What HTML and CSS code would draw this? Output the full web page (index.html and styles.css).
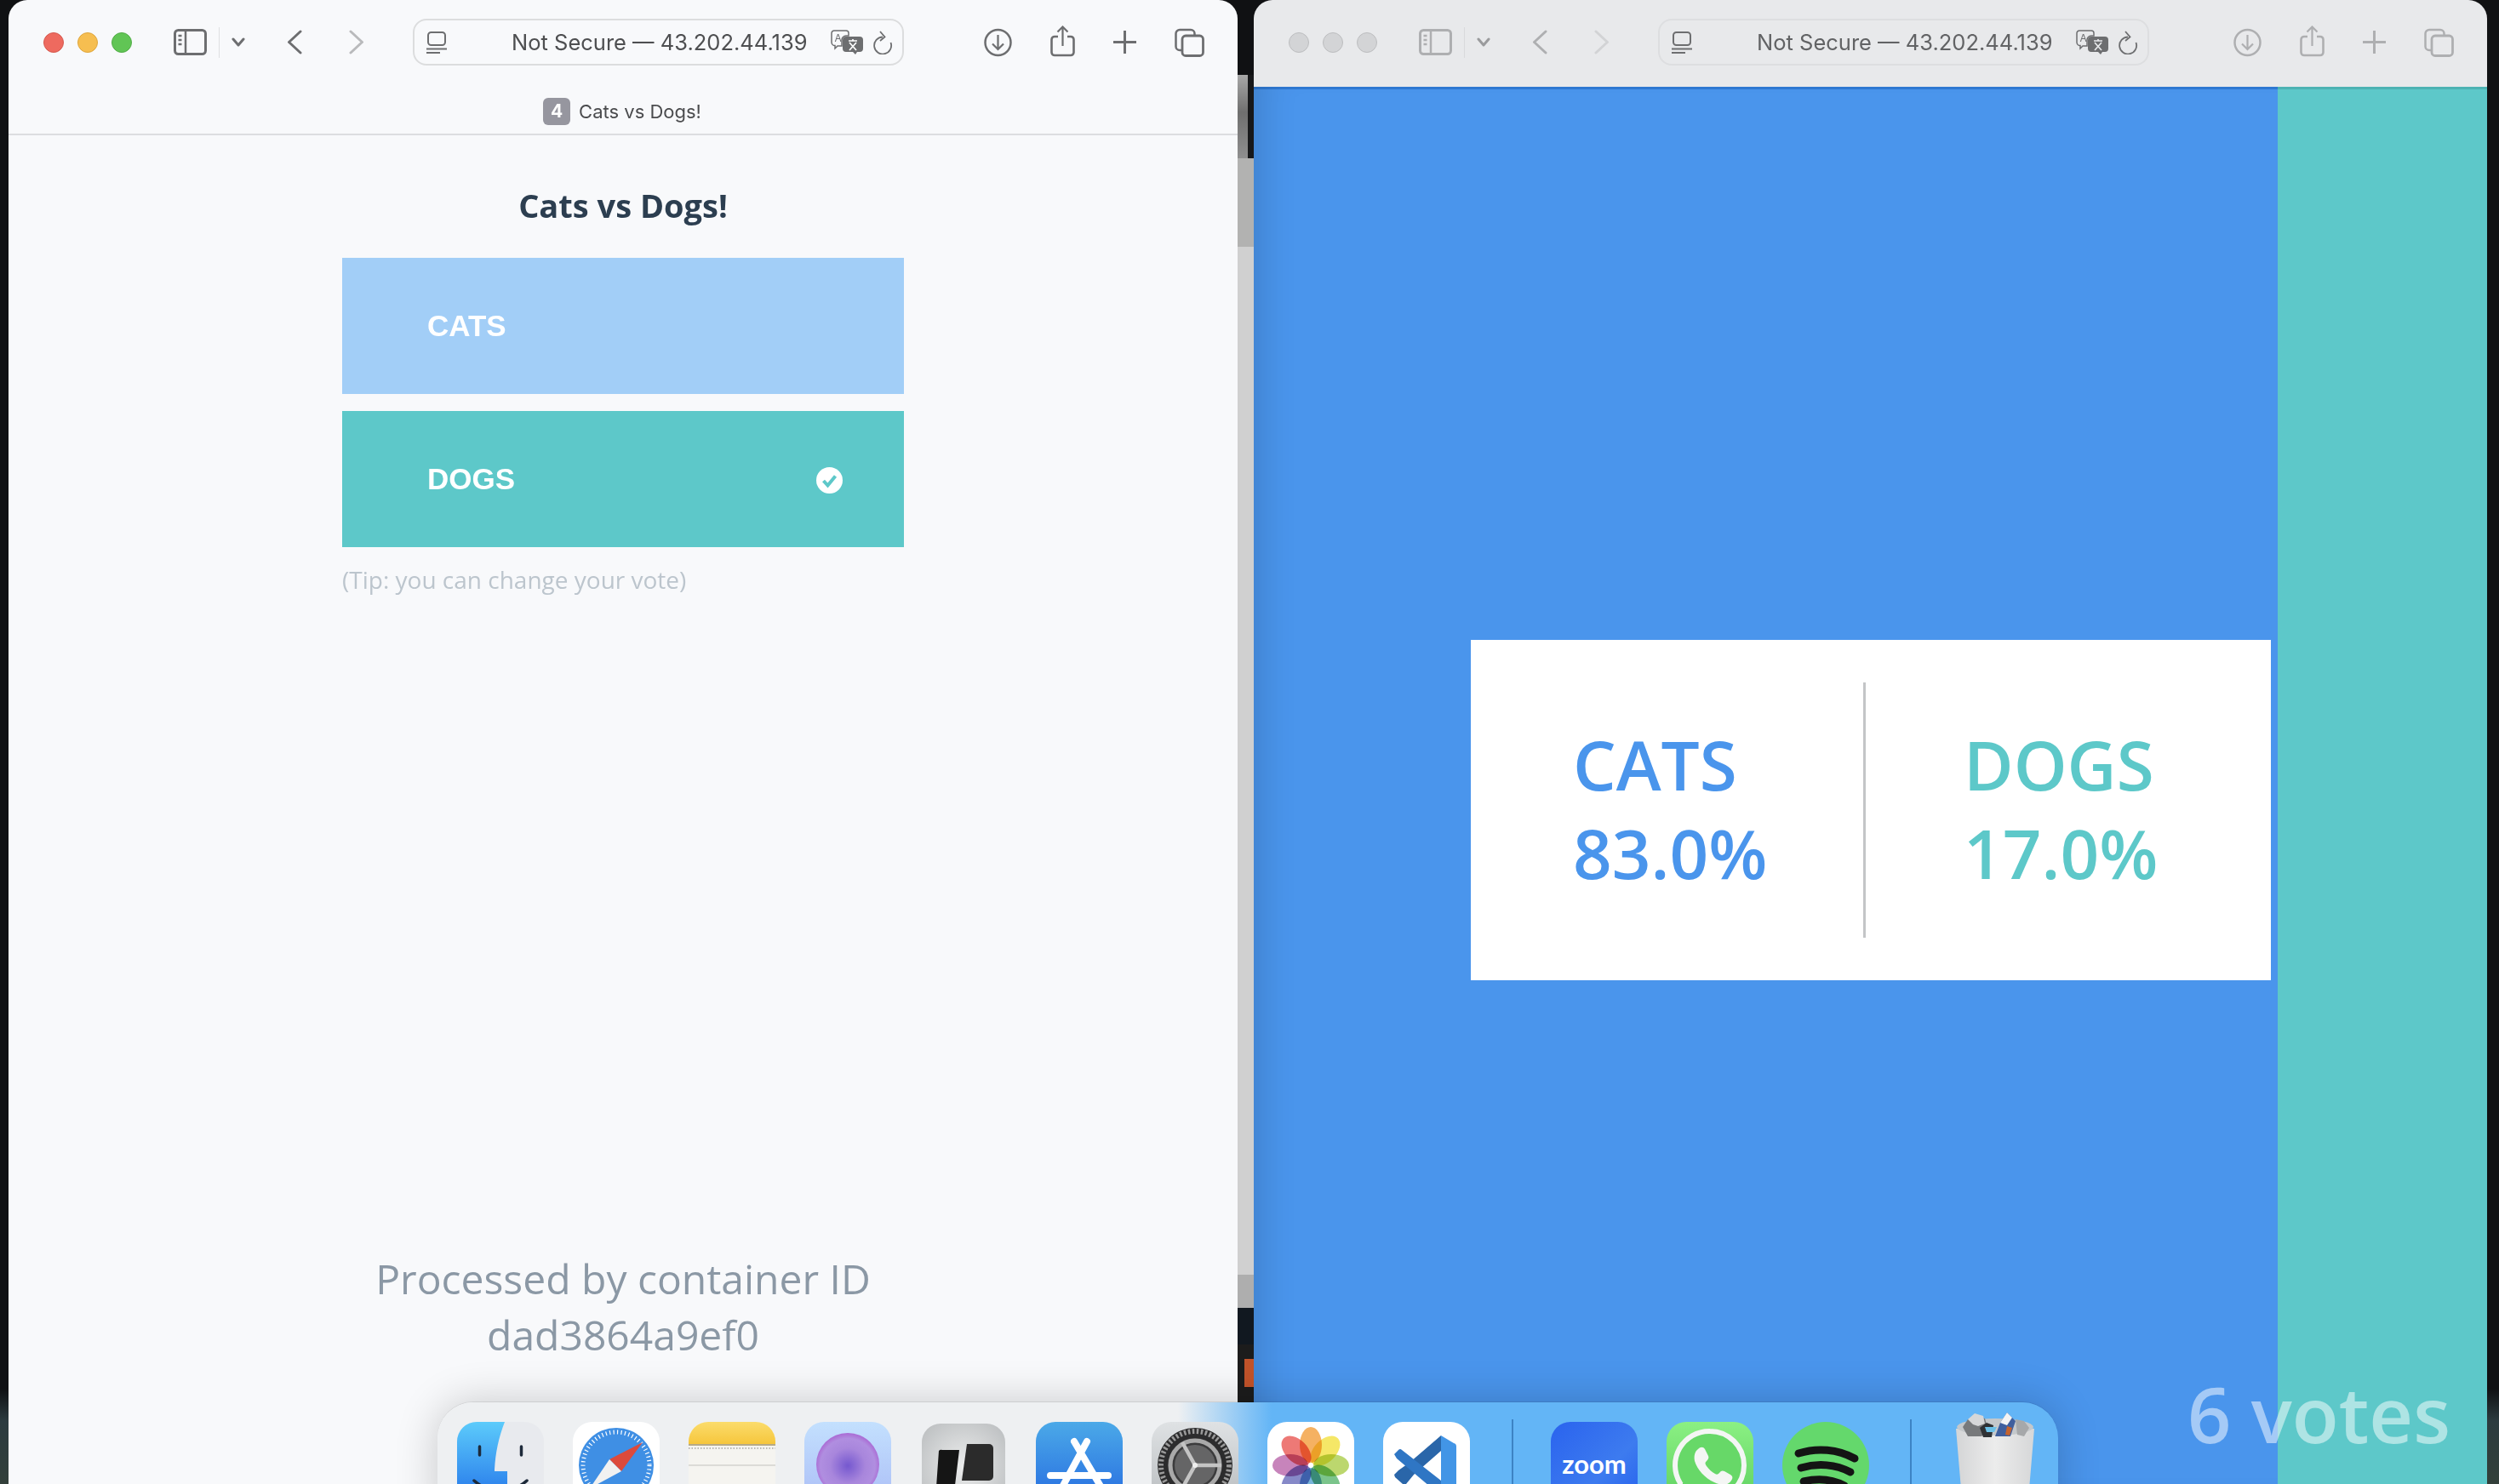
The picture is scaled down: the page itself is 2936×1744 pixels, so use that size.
FILE: index.html
```html
<!DOCTYPE html>
<html lang="en">
<head>
  <meta charset="UTF-8" />
  <title>Cats vs Dogs!</title>
  <link rel="stylesheet" href="styles.css">
</head>
<body>

  <!-- Toolbar icon sprite -->
  <svg class="sprite" aria-hidden="true">
    <symbol id="i-sidebar" viewBox="0 0 39 31"><rect x="1.5" y="1.5" width="36" height="28" rx="4" fill="none" stroke="currentColor" stroke-width="3"/><path d="M14 2v27M5.500 8h4M5.500 13h4M5.500 18h4" fill="none" stroke="currentColor" stroke-width="2.500"/></symbol>
    <symbol id="i-chevron" viewBox="0 0 16 11"><path d="M2 2l6 7 6-7" fill="none" stroke="currentColor" stroke-width="3" stroke-linecap="round" stroke-linejoin="round"/></symbol>
    <symbol id="i-back" viewBox="0 0 18 29"><path d="M16 2L2.500 14.500 16 27" fill="none" stroke="currentColor" stroke-width="3" stroke-linecap="round" stroke-linejoin="round"/></symbol>
    <symbol id="i-forward" viewBox="0 0 18 29"><path d="M2 2l13.500 12.500L2 27" fill="none" stroke="currentColor" stroke-width="3" stroke-linecap="round" stroke-linejoin="round"/></symbol>
    <symbol id="i-page" viewBox="0 0 24 26"><rect x="2" y="1" width="20" height="15" rx="3.500" fill="none" stroke="currentColor" stroke-width="2"/><path d="M0 20.500h24M0 25h16" fill="none" stroke="currentColor" stroke-width="2"/></symbol>
    <symbol id="i-reload" viewBox="0 0 23 28"><path d="M11 7.500A10 10 0 1 0 20.500 14" fill="none" stroke="currentColor" stroke-width="1.800"/><path d="M8 1l5.500 6.500L8 12" fill="none" stroke="currentColor" stroke-width="1.800"/></symbol>
    <symbol id="i-download" viewBox="0 0 33 34"><circle cx="16.500" cy="17" r="15" fill="none" stroke="currentColor" stroke-width="2.500"/><path d="M16.500 8v17M10 18.500l6.500 6.500 6.500-6.500" fill="none" stroke="currentColor" stroke-width="2.200"/></symbol>
    <symbol id="i-share" viewBox="0 0 29 37"><path d="M9 13H5a3.500 3.500 0 0 0-3.500 3.500v15A3.500 3.500 0 0 0 5 35h19a3.500 3.500 0 0 0 3.500-3.500v-15A3.500 3.500 0 0 0 24 13h-4" fill="none" stroke="currentColor" stroke-width="2.600"/><path d="M14.500 24V2M8.500 7.500l6-6 6 6" fill="none" stroke="currentColor" stroke-width="2.200"/></symbol>
    <symbol id="i-plus" viewBox="0 0 27 27"><path d="M13.500 0v27M0 13.500h27" fill="none" stroke="currentColor" stroke-width="3"/></symbol>
    <symbol id="i-tabs" viewBox="0 0 35 34"><path d="M8 26H6a4.500 4.500 0 0 1-4.500-4.500v-15A4.500 4.500 0 0 1 6 2h13a4.500 4.500 0 0 1 4.500 4.500V8" fill="none" stroke="currentColor" stroke-width="2.500"/><rect x="9" y="9" width="24.500" height="23.500" rx="4" fill="none" stroke="currentColor" stroke-width="2.800"/></symbol>
  </svg>

  <!-- Slice of the desktop between the two windows -->
  <div class="desk-strip">
    <div class="strip-top"></div>
    <div class="strip-bar"></div>
    <div class="strip-gray"></div>
    <div class="strip-light"></div>
    <div class="strip-mid"></div>
    <div class="strip-navy"></div>
    <div class="strip-term"><span class="ubuntu-tile"></span></div>
  </div>

  <!-- === Vote window === -->
  <section class="window window-left">
    <header class="toolbar">
      <div class="lights">
        <span class="light red"></span>
        <span class="light yellow"></span>
        <span class="light green"></span>
      </div>
      <svg class="tb-sidebar"><use href="#i-sidebar"/></svg>
      <span class="tb-divider"></span>
      <svg class="tb-chevron"><use href="#i-chevron"/></svg>
      <svg class="tb-back"><use href="#i-back"/></svg>
      <svg class="tb-forward"><use href="#i-forward"/></svg>
      <div class="address">
        <svg class="addr-page"><use href="#i-page"/></svg>
        <span class="addr-text">Not Secure — 43.202.44.139</span>
        <svg class="addr-translate" viewBox="0 0 38 29">
          <path d="M4 1h14a3 3 0 0 1 3 3v3h-3a5 5 0 0 0-5 5v7H8l-3 3v-3.500A4 4 0 0 1 1 15V4a3 3 0 0 1 3-3z" fill="none" stroke="currentColor" stroke-width="1.500"/>
          <text x="4.500" y="14" class="glyph-a">A</text>
          <path d="M18 8h16a4 4 0 0 1 4 4v10a4 4 0 0 1-4 4h-3l-2 3-3-3h-8a4 4 0 0 1-4-4V12a4 4 0 0 1 4-4z" fill="currentColor"/>
          <path d="M21 13h10M26 11v2M22 24l8-9M22 15l8 9" stroke="#fff" stroke-width="1.700" fill="none"/>
        </svg>
        <svg class="addr-reload"><use href="#i-reload"/></svg>
      </div>
      <div class="tb-actions">
        <svg class="tb-download"><use href="#i-download"/></svg>
        <svg class="tb-share"><use href="#i-share"/></svg>
        <svg class="tb-plus"><use href="#i-plus"/></svg>
        <svg class="tb-tabs"><use href="#i-tabs"/></svg>
      </div>
    </header>

    <div class="tabline">
      <span class="tab-badge">4</span>
      <span class="tab-title">Cats vs Dogs!</span>
    </div>

    <main class="vote-page">
      <h3 class="vote-title">Cats vs Dogs!</h3>
      <div class="vote-box">
        <button class="choice choice-cats">CATS</button>
        <button class="choice choice-dogs">
          DOGS
          <svg class="choice-check" viewBox="0 0 31 31">
            <circle cx="15.500" cy="15.500" r="15.500" fill="#fff"/>
            <path d="M8.500 16l5 5.500 9-11" fill="none" stroke="#5dc8c9" stroke-width="4"/>
          </svg>
        </button>
        <p class="tip">(Tip: you can change your vote)</p>
      </div>
      <p class="processed">Processed by container ID<br>dad3864a9ef0</p>
    </main>
  </section>

  <!-- === Result window === -->
  <section class="window window-right">
    <header class="toolbar">
      <div class="lights">
        <span class="light off"></span>
        <span class="light off"></span>
        <span class="light off"></span>
      </div>
      <svg class="tb-sidebar"><use href="#i-sidebar"/></svg>
      <span class="tb-divider"></span>
      <svg class="tb-chevron"><use href="#i-chevron"/></svg>
      <svg class="tb-back"><use href="#i-back"/></svg>
      <svg class="tb-forward"><use href="#i-forward"/></svg>
      <div class="address">
        <svg class="addr-page"><use href="#i-page"/></svg>
        <span class="addr-text">Not Secure — 43.202.44.139</span>
        <svg class="addr-translate" viewBox="0 0 38 29">
          <path d="M4 1h14a3 3 0 0 1 3 3v3h-3a5 5 0 0 0-5 5v7H8l-3 3v-3.500A4 4 0 0 1 1 15V4a3 3 0 0 1 3-3z" fill="none" stroke="currentColor" stroke-width="1.500"/>
          <text x="4.500" y="14" class="glyph-a">A</text>
          <path d="M18 8h16a4 4 0 0 1 4 4v10a4 4 0 0 1-4 4h-3l-2 3-3-3h-8a4 4 0 0 1-4-4V12a4 4 0 0 1 4-4z" fill="currentColor"/>
          <path d="M21 13h10M26 11v2M22 24l8-9M22 15l8 9" stroke="#e8e9eb" stroke-width="1.700" fill="none"/>
        </svg>
        <svg class="addr-reload"><use href="#i-reload"/></svg>
      </div>
      <div class="tb-actions">
        <svg class="tb-download"><use href="#i-download"/></svg>
        <svg class="tb-share"><use href="#i-share"/></svg>
        <svg class="tb-plus"><use href="#i-plus"/></svg>
        <svg class="tb-tabs"><use href="#i-tabs"/></svg>
      </div>
    </header>

    <main class="result-page">
      <div class="pane-cats"></div>
      <div class="pane-dogs"></div>

      <div class="result-card">
        <div class="result-col col-cats">
          <div>CATS</div>
          <div>83.0%</div>
        </div>
        <div class="result-col col-dogs">
          <div>DOGS</div>
          <div>17.0%</div>
        </div>
      </div>

      <div class="votes">6 votes</div>
    </main>
  </section>

  <!-- === Dock === -->
  <footer class="dock">
    <!-- Finder -->
    <svg class="dock-icon" viewBox="0 0 102 102">
      <defs>
        <linearGradient id="g-finder" x1="0" y1="0" x2="0" y2="1"><stop offset="0" stop-color="#5ccbfb"/><stop offset="1" stop-color="#1f6de8"/></linearGradient>
      </defs>
      <rect width="102" height="102" rx="23" fill="#e8eaee"/>
      <path d="M23 0h33c-7 18-11 36-12 56v2h15v44H23A23 23 0 0 1 0 79V23A23 23 0 0 1 23 0z" fill="url(#g-finder)"/>
      <path d="M26.500 29v10M75.500 29v10" stroke="#1d2a3a" stroke-width="3.500" stroke-linecap="round"/>
      <path d="M20 69c18 16 44 16 62 0" fill="none" stroke="#1d2a3a" stroke-width="3.500" stroke-linecap="round"/>
    </svg>
    <!-- Safari -->
    <svg class="dock-icon" viewBox="0 0 102 102">
      <rect width="102" height="102" rx="23" fill="#fff"/>
      <circle cx="51" cy="51" r="44" fill="#3f8fe4"/>
      <circle cx="51" cy="51" r="39" fill="none" stroke="#fff" stroke-width="5" stroke-dasharray="1.200 3.300"/>
      <path d="M82 24L43 44l14 14z" fill="#dc4a3c"/>
      <path d="M20 78l23-34 14 14z" fill="#f1f1f1"/>
    </svg>
    <!-- Notes -->
    <svg class="dock-icon" viewBox="0 0 102 102">
      <defs>
        <linearGradient id="g-notes" x1="0" y1="0" x2="0" y2="1"><stop offset="0" stop-color="#fbdc6c"/><stop offset="1" stop-color="#f6c63c"/></linearGradient>
        <clipPath id="c-notes"><rect width="102" height="102" rx="23"/></clipPath>
      </defs>
      <g clip-path="url(#c-notes)">
        <rect width="102" height="102" fill="#f5f4f0"/>
        <rect width="102" height="26" fill="url(#g-notes)"/>
        <rect y="26" width="102" height="2" fill="#b5aa88"/>
        <path d="M0 31h102" stroke="#b9b9b6" stroke-width="2" stroke-dasharray="1.500 2"/>
        <path d="M0 51h102M0 76h102" stroke="#dcdbd7" stroke-width="2"/>
      </g>
    </svg>
    <!-- Orb -->
    <svg class="dock-icon" viewBox="0 0 102 102">
      <defs>
        <linearGradient id="g-orb-bg" x1="0" y1="0" x2="0" y2="1"><stop offset="0" stop-color="#c3e0fe"/><stop offset="1" stop-color="#aabcf6"/></linearGradient>
        <radialGradient id="g-orb" cx="0.500" cy="0.520" r="0.620"><stop offset="0" stop-color="#7558cf"/><stop offset="0.450" stop-color="#a886dc"/><stop offset="0.700" stop-color="#b08ee0"/><stop offset="1" stop-color="#a33fc6"/></radialGradient>
      </defs>
      <rect width="102" height="102" rx="23" fill="url(#g-orb-bg)"/>
      <circle cx="51" cy="50" r="37" fill="url(#g-orb)"/>
    </svg>
    <!-- Black tile app -->
    <svg class="dock-icon" viewBox="0 0 102 102">
      <defs>
        <radialGradient id="g-tile" cx="0.500" cy="0.500" r="0.700"><stop offset="0" stop-color="#eceded"/><stop offset="1" stop-color="#b9bcbe"/></radialGradient>
      </defs>
      <rect x="2" y="2" width="98" height="100" rx="22" fill="url(#g-tile)"/>
      <path d="M22 34a4 4 0 0 1 4-1h20l-7 58H18z" fill="#151515"/>
      <path d="M55 26h26a5 5 0 0 1 5 5v33a5 5 0 0 1-5 5H49z" fill="#2b2b2b"/>
    </svg>
    <!-- App Store -->
    <svg class="dock-icon" viewBox="0 0 102 102">
      <defs>
        <linearGradient id="g-store" x1="0" y1="0" x2="0" y2="1"><stop offset="0" stop-color="#4ba9e8"/><stop offset="1" stop-color="#2468e0"/></linearGradient>
      </defs>
      <rect width="102" height="102" rx="23" fill="url(#g-store)"/>
      <path d="M60 23L27 84M45 23l36 61M17 63h68" fill="none" stroke="#fff" stroke-width="8" stroke-linecap="round"/>
    </svg>
    <!-- System Settings -->
    <svg class="dock-icon" viewBox="0 0 102 102">
      <defs>
        <linearGradient id="g-gear" x1="0" y1="0" x2="0" y2="1"><stop offset="0" stop-color="#dfe2e4"/><stop offset="1" stop-color="#b6babd"/></linearGradient>
      </defs>
      <rect width="102" height="102" rx="23" fill="url(#g-gear)"/>
      <circle cx="51" cy="51" r="44" fill="#2c2c2d"/>
      <circle cx="51" cy="51" r="40" fill="none" stroke="#9a9a9a" stroke-width="6" stroke-dasharray="2.500 2.500"/>
      <circle cx="51" cy="51" r="32" fill="#3b3b3c"/>
      <circle cx="51" cy="51" r="29" fill="none" stroke="#a9a9a9" stroke-width="5"/>
      <circle cx="51" cy="51" r="24" fill="#656566"/>
      <path d="M51 51L36 24M51 51l31 0M51 51L36 78" stroke="#c4c4c4" stroke-width="4.500"/>
      <circle cx="51" cy="51" r="3" fill="#efefef"/>
    </svg>
    <!-- Photos -->
    <svg class="dock-icon" viewBox="0 0 102 102">
      <rect width="102" height="102" rx="23" fill="#fff"/>
      <g class="petals">
        <ellipse cx="51" cy="27" rx="13" ry="21" fill="#f29b35" transform="rotate(0 51 51)"/>
        <ellipse cx="51" cy="27" rx="13" ry="21" fill="#f2e13c" transform="rotate(45 51 51)"/>
        <ellipse cx="51" cy="27" rx="13" ry="21" fill="#a9cc45" transform="rotate(90 51 51)"/>
        <ellipse cx="51" cy="27" rx="13" ry="21" fill="#55b36a" transform="rotate(135 51 51)"/>
        <ellipse cx="51" cy="27" rx="13" ry="21" fill="#4f9ed0" transform="rotate(180 51 51)"/>
        <ellipse cx="51" cy="27" rx="13" ry="21" fill="#6467b8" transform="rotate(225 51 51)"/>
        <ellipse cx="51" cy="27" rx="13" ry="21" fill="#b761a8" transform="rotate(270 51 51)"/>
        <ellipse cx="51" cy="27" rx="13" ry="21" fill="#e8534f" transform="rotate(315 51 51)"/>
      </g>
    </svg>
    <!-- VS Code -->
    <svg class="dock-icon" viewBox="0 0 102 102">
      <rect width="102" height="102" rx="23" fill="#fff"/>
      <path d="M14 65l-1-3 5-5 14-10 36-31v18L36 62l-9 11a3 3 0 0 1-4 0z" fill="#2a66a9"/>
      <path d="M13 38l5-5a3 3 0 0 1 4 0l46 36v18L16 43z" fill="#2f76c4"/>
      <path d="M68 16l15 9a4 4 0 0 1 3 4v44a4 4 0 0 1-3 4l-15 10z" fill="#4295e6"/>
    </svg>

    <span class="dock-sep sep-one"></span>

    <!-- Zoom -->
    <div class="dock-zoom"><span>zoom</span></div>
    <!-- WhatsApp -->
    <svg class="dock-icon" viewBox="0 0 102 102">
      <defs>
        <linearGradient id="g-wa" x1="0" y1="0" x2="0" y2="1"><stop offset="0" stop-color="#8bf083"/><stop offset="1" stop-color="#5ccf5f"/></linearGradient>
      </defs>
      <rect width="102" height="102" rx="23" fill="url(#g-wa)"/>
      <path d="M51 11a40 40 0 0 1 0 80c-7 0-14-2-20-5l-21 6 6-20a40 40 0 0 1 35-61z" fill="#67d868" stroke="#f4f6f4" stroke-width="6"/>
      <path d="M37 32c3-3 6-3 8 0l4 8c1 2 0 4-2 6-2 2-2 3 0 6 3 4 6 7 10 9 2 1 3 1 5-1 2-3 4-3 6-2l7 4c3 2 3 4 1 7-4 6-12 6-20 2-11-5-20-15-23-25-1-6 0-11 4-14z" fill="#f4f6f4"/>
    </svg>
    <!-- Spotify -->
    <svg class="dock-icon" viewBox="0 0 102 102">
      <circle cx="51" cy="51" r="51" fill="#64d86c"/>
      <path d="M19 37c22-7 46-5 66 6M22 54c20-6 41-4 58 5M25 70c17-4 33-3 48 5" fill="none" stroke="#141414" stroke-width="9" stroke-linecap="round"/>
    </svg>

    <span class="dock-sep sep-two"></span>

    <!-- Trash -->
    <svg class="dock-trash" viewBox="0 0 92 90">
      <defs>
        <linearGradient id="g-trash" x1="0" y1="0" x2="1" y2="0"><stop offset="0" stop-color="#d4d5d6"/><stop offset="0.500" stop-color="#ececec"/><stop offset="1" stop-color="#d6d7d8"/></linearGradient>
      </defs>
      <path d="M0 19l6 71h80l6-71z" fill="url(#g-trash)"/>
      <ellipse cx="46" cy="17" rx="45" ry="10" fill="#c4c8cb"/>
      <path d="M8 17l6-9 12-3 8 2 4 14-8 7H14z" fill="#77797b"/>
      <path d="M14 8l8-7 10 3 2 9-8 3-6-2z" fill="#d6d7d8"/>
      <path d="M28 18l8-6 8 3-2 14H32z" fill="#2f3134"/>
      <path d="M34 17h14l-3 6H36z" fill="#6cc1e8"/>
      <path d="M46 28l6-16 8-12 10 10-6 18z" fill="#3f5f9e"/>
      <path d="M52 12l8-12 6 6-6 9z" fill="#f4f4f4"/>
      <path d="M60 16l6 2-3 9-5-1z" fill="#c4632e"/>
      <path d="M70 8l10 2 6 8-6 10-8-2z" fill="#a6a8aa"/>
    </svg>
  </footer>

</body>
</html>
```

FILE: styles.css
```css
/* === Desktop === */
html, body {
  margin: 0;
  height: 100%;
}

body {
  position: relative;
  width: 2936px;
  height: 1744px;
  overflow: hidden;
  background: linear-gradient(#101113 0, #101113 1632px, #2c3b3f 1670px, #33403a 1744px);
  font-family: 'Open Sans', sans-serif;
}

.sprite {
  position: absolute;
  width: 0;
  height: 0;
}

/* === Strip between windows === */
.desk-strip {
  position: absolute;
  left: 1454px;
  top: 0;
  width: 19px;
  height: 1744px;
  display: flex;
  flex-direction: column;
}

.strip-top {
  height: 88px;
  background: #101113;
}

.strip-bar {
  height: 98px;
  background: linear-gradient(#a8a8a8, #6f6f6f 45%, #8f8f8f);
  border-right: 7px solid #17181a;
}

.strip-gray {
  height: 104px;
  background: #b2b2b1;
}

.strip-light {
  height: 1208px;
  background: #d0d0d0;
}

.strip-mid {
  height: 39px;
  background: #aeaeae;
}

.strip-navy {
  height: 43px;
  background: #111820;
}

.strip-term {
  flex: 1;
  background: #1c1c1c;
  padding: 17px 0 0 8px;
}

.ubuntu-tile {
  display: block;
  width: 11px;
  height: 33px;
  background: #c2532a;
}

/* === Windows === */
.window {
  position: absolute;
  top: 0;
  height: 1744px;
  border-radius: 22px 22px 0 0;
  overflow: hidden;
  display: flex;
  flex-direction: column;
}

.window-left {
  left: 10px;
  width: 1444px;
  background: #f8f9fb;
}

.window-right {
  left: 1473px;
  width: 1449px;
  background: #e8e9eb;
}

/* === Toolbar === */
.toolbar {
  flex: none;
  height: 102px;
  display: flex;
  align-items: center;
  padding: 0 0 3px 41px;
  box-sizing: border-box;
  color: #6d6e70;
}

.toolbar svg {
  flex: none;
}

.lights {
  display: flex;
  gap: 16px;
  margin-right: 49px;
}

.light {
  width: 24px;
  height: 24px;
  border-radius: 50%;
  box-sizing: border-box;
}

.red {
  background: #ee6a5f;
  border: 1px solid #d5594f;
}

.yellow {
  background: #f6be50;
  border: 1px solid #dfa63c;
}

.green {
  background: #61c555;
  border: 1px solid #52ad47;
}

.off {
  background: #d3d4d6;
  border: 1px solid #bcbdbf;
}

.tb-sidebar {
  width: 39px;
  height: 31px;
}

.tb-divider {
  width: 1px;
  height: 36px;
  margin: 0 14px;
  background: #dfe0e2;
}

.tb-chevron {
  width: 16px;
  height: 11px;
  margin-right: 49px;
}

.tb-back {
  width: 18px;
  height: 29px;
  margin-right: 55px;
}

.tb-forward {
  width: 18px;
  height: 29px;
  margin-right: 57px;
  color: #b9babc;
}

/* === Address bar === */
.address {
  width: 577px;
  height: 55px;
  display: flex;
  align-items: center;
  box-sizing: border-box;
  padding: 0 11px 0 14px;
  border: 2px solid #dcddde;
  border-radius: 16px;
}

.addr-page {
  width: 24px;
  height: 26px;
}

.addr-text {
  margin-left: 76px;
  font-family: Inter, sans-serif;
  font-size: 25.500px;
  color: #4e4f51;
  white-space: nowrap;
}

.addr-translate {
  width: 38px;
  height: 29px;
  margin-left: auto;
}

.addr-reload {
  width: 23px;
  height: 28px;
  margin-left: 12px;
}

.glyph-a {
  font-family: Inter, sans-serif;
  font-size: 12px;
  fill: currentColor;
}

/* === Toolbar actions === */
.tb-actions {
  margin-left: auto;
  padding-right: 39px;
  display: flex;
  align-items: center;
  gap: 45px;
}

.tb-download {
  width: 33px;
  height: 34px;
}

.tb-share {
  width: 29px;
  height: 37px;
  margin-top: -3px;
}

.tb-plus {
  width: 27px;
  height: 27px;
}

.tb-tabs {
  width: 35px;
  height: 34px;
}

/* Inactive window is washed out */
.window-right .tb-sidebar,
.window-right .tb-chevron,
.window-right .tb-back,
.window-right .tb-actions {
  color: #aeafb1;
}

.window-right .tb-chevron {
  color: #9a9b9d;
}

.window-right .tb-forward {
  color: #d2d3d5;
}

.window-right .addr-text {
  color: #626365;
}

.window-right .address {
  border-color: #dddee0;
}

.window-right .tb-divider {
  background: #d9dadc;
}

/* === Tab line === */
.tabline {
  flex: none;
  height: 57px;
  display: flex;
  justify-content: center;
  align-items: center;
  gap: 10px;
  padding: 2px 2px 0 0;
  box-sizing: border-box;
  border-bottom: 2px solid #dcdde0;
}

.tab-badge {
  width: 32px;
  height: 32px;
  border-radius: 6px;
  background: #96969f;
  color: #fff;
  font-family: Inter, sans-serif;
  font-size: 21px;
  font-weight: 700;
  line-height: 32px;
  text-align: center;
}

.tab-title {
  font-family: Inter, sans-serif;
  font-size: 22px;
  color: #4b4c4e;
}

/* === Vote page === */
.vote-page {
  flex: 1;
  display: flex;
  flex-direction: column;
  align-items: center;
}

.vote-title {
  margin: 56px 0 0;
  font-size: 38px;
  font-weight: 700;
  line-height: 52px;
  color: #2c3e50;
}

.vote-box {
  width: 660px;
  margin-top: 36px;
}

.choice {
  width: 100%;
  height: 160px;
  display: flex;
  align-items: center;
  justify-content: space-between;
  margin: 0 0 20px;
  padding: 0 72px 0 100px;
  border: 0;
  color: #fff;
  font-family: 'Liberation Sans', Arial, sans-serif;
  font-size: 35px;
  font-weight: 700;
}

.choice-cats {
  background: #a2cef7;
}

.choice-dogs {
  background: #5dc8c9;
}

.choice-check {
  width: 31px;
  height: 31px;
  margin-top: 2px;
}

.tip {
  margin: 0;
  font-size: 28px;
  line-height: 36px;
  color: #bcc5cd;
}

.processed {
  margin: 771px 0 0;
  font-size: 48px;
  line-height: 66px;
  text-align: center;
  color: #8b98a5;
}

/* === Result page === */
.result-page {
  position: relative;
  flex: 1;
  display: flex;
}

.pane-cats {
  width: 1203px;
  background: #4a95ec;
  box-shadow: inset 40px 0 40px -30px rgba(0, 0, 0, 0.14), inset 0 3px 0 #2f79d3;
}

.pane-dogs {
  flex: 1;
  background: #5dc8c9;
  box-shadow: inset 0 3px 0 #4db2b3;
}

.result-card {
  position: absolute;
  left: 255px;
  top: 650px;
  width: 940px;
  height: 400px;
  display: flex;
  align-items: center;
  background: #fff;
  font-size: 80px;
  font-weight: 600;
  line-height: 104px;
}

.result-col {
  height: 300px;
  display: flex;
  flex-direction: column;
  justify-content: center;
  box-sizing: border-box;
  padding-bottom: 4px;
}

.col-cats {
  width: 461px;
  padding-left: 120px;
  color: #4a95ec;
}

.col-dogs {
  flex: 1;
  padding-left: 115px;
  border-left: 3px solid #c3c5c7;
  color: #5dc8c9;
}

.votes {
  position: absolute;
  right: 43px;
  top: 1494px;
  font-size: 90px;
  font-weight: 600;
  line-height: 130px;
  color: rgba(255, 255, 255, 0.5);
}

/* === Dock === */
.dock {
  position: absolute;
  left: 514px;
  top: 1648px;
  width: 1904px;
  height: 140px;
  display: flex;
  align-items: flex-start;
  gap: 34px;
  box-sizing: border-box;
  padding: 23px 0 0 23px;
  border-radius: 42px 42px 0 0;
  background: linear-gradient(90deg, #eef0f2 0, #eef0f2 870px, #63b5f6 980px, #63b5f6 100%);
  box-shadow: 0 0 50px rgba(0, 0, 0, 0.2), 0 -1px 0 rgba(0, 0, 0, 0.08);
}

.dock-icon {
  flex: none;
  width: 102px;
  height: 102px;
}

.petals ellipse {
  opacity: 0.78;
  mix-blend-mode: multiply;
}

.dock-sep {
  flex: none;
  width: 2px;
  height: 100px;
  margin-top: -3px;
  background: #3d83c4;
}

.sep-one {
  margin-left: 15px;
  margin-right: 10px;
}

.sep-two {
  margin-left: 14px;
  margin-right: 18px;
}

.dock-zoom {
  flex: none;
  width: 102px;
  height: 102px;
  display: flex;
  align-items: center;
  justify-content: center;
  padding-bottom: 4px;
  box-sizing: border-box;
  border-radius: 23px;
  background: linear-gradient(135deg, #2a63ee, #3d7bef 60%, #2560ee);
  color: #fff;
  font-family: Lato, sans-serif;
  font-size: 31px;
  font-weight: 700;
}

.dock-trash {
  flex: none;
  width: 92px;
  height: 90px;
  margin-top: -11px;
}
```
